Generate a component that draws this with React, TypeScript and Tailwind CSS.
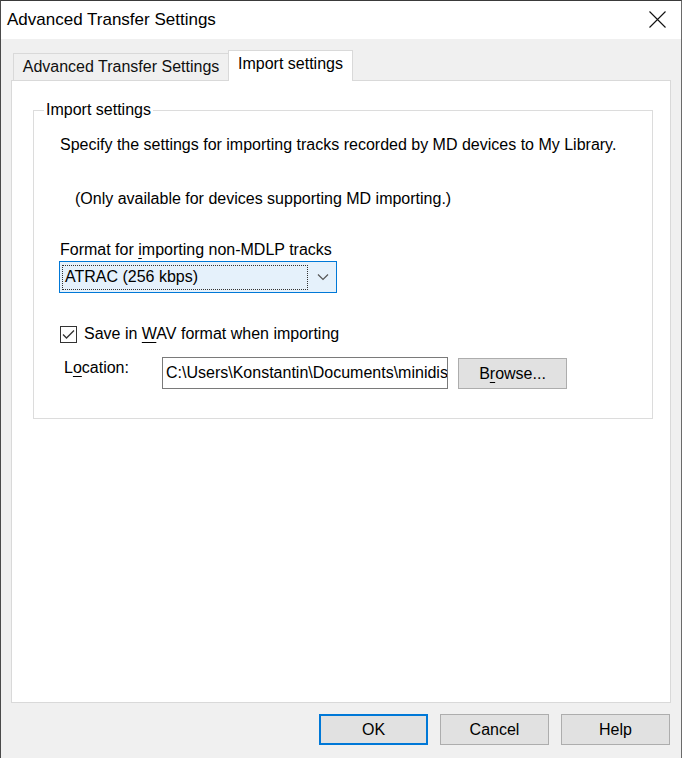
import { useState } from "react";

const font = { fontFamily: '"Liberation Sans", Arial, sans-serif' };

function U({ children }: { children: string }) {
  return <span className="underline underline-offset-[3px]">{children}</span>;
}

function Button({ label, primary }: { label: React.ReactNode; primary?: boolean }) {
  return (
    <button
      className={
        "w-[109px] h-[31px] bg-[#e1e1e1] text-[16px] text-black " +
        (primary ? "border-2 border-[#0078d7]" : "border border-[#adadad]")
      }
    >
      {label}
    </button>
  );
}

export default function App() {
  const [saveWav, setSaveWav] = useState(true);

  return (
    <div
      className="w-[682px] h-[758px] bg-[#f0f0f0] border-l border-t border-r border-l-[#4a4a4a] border-t-[#3a3a3a] border-r-[#6a6a6a] flex flex-col overflow-hidden text-black"
      style={font}
    >
      {/* Title bar */}
      <div className="h-[38px] bg-white flex items-center justify-between pl-[6px] pr-[15px]">
        <span className="text-[17px]">Advanced Transfer Settings</span>
        <svg width="17" height="17" viewBox="0 0 17 17" className="mb-[1px]">
          <path d="M0.5 0.5 L16.5 16.5 M16.5 0.5 L0.5 16.5" stroke="#111" strokeWidth="1.1" />
        </svg>
      </div>

      {/* Tabs */}
      <div className="flex items-end h-[41px] pl-[12px]">
        <div className="h-[27px] w-[215px] border-t border-l border-[#d9d9d9] flex items-center justify-center text-[16px] text-[#111]">
          Advanced Transfer Settings
        </div>
        <div className="h-[31px] w-[125px] bg-white border-t border-l border-r border-[#d9d9d9] flex items-center justify-center text-[16px] pb-[5px] -mb-px relative">
          Import settings
        </div>
      </div>

      {/* Tab panel */}
      <div className="ml-[10px] w-[660px] h-[623px] bg-white border border-[#d9d9d9] pt-[19px] pl-[21px]">
        <fieldset className="w-[620px] h-[319px] border border-[#dcdcdc]">
          <legend className="ml-[10px] px-[2px] text-[16px] leading-[20px]">Import settings</legend>

          <div className="pl-[26px]">
            <div className="text-[16px] leading-[20px] mt-[15px]">
              Specify the settings for importing tracks recorded by MD devices to My Library.
            </div>
            <div className="text-[16px] leading-[20px] mt-[34px] pl-[15px]">
              (Only available for devices supporting MD importing.)
            </div>
            <div className="text-[16px] leading-[20px] mt-[31px]">
              Format for <U>i</U>mporting non-MDLP tracks
            </div>

            {/* Combo box */}
            <div className="mt-[1px] -ml-px w-[278px] h-[32px] bg-[#e5f1fb] border border-[#0078d7] flex items-center pl-[2px] pr-[7px]">
              <div className="h-[25px] w-[246px] border border-dotted border-[#333] flex items-center pl-[2px] text-[16px]">
                ATRAC (256 kbps)
              </div>
              <svg width="12" height="8" viewBox="0 0 12 8" className="ml-auto">
                <path d="M1 1.5 L6 6.5 L11 1.5" fill="none" stroke="#555" strokeWidth="1.2" />
              </svg>
            </div>

            {/* Checkbox */}
            <label className="mt-[31px] flex items-center gap-[7px] text-[16px] leading-[20px] w-fit">
              <button
                onClick={() => setSaveWav(!saveWav)}
                className="w-[17px] h-[17px] border border-[#333] bg-white flex items-center justify-center"
              >
                {saveWav && (
                  <svg width="13" height="11" viewBox="0 0 13 11">
                    <path d="M1 5.5 L4.5 9 L12 1.5" fill="none" stroke="#333" strokeWidth="1.3" />
                  </svg>
                )}
              </button>
              <span>
                Save in <U>W</U>AV format when importing
              </span>
            </label>

            {/* Location */}
            <div className="mt-[13px] flex items-start">
              <span className="w-[102px] pl-[4px] pt-[1px] text-[16px] leading-[20px]">
                L<U>o</U>cation:
              </span>
              <div className="w-[286px] h-[32px] border border-[#7a7a7a] bg-white overflow-hidden whitespace-nowrap pl-[3px] flex items-center text-[16px]">
                C:\Users\Konstantin\Documents\minidisc
              </div>
              <div className="ml-[10px] mt-px">
                <Button
                  label={
                    <>
                      B<U>r</U>owse...
                    </>
                  }
                />
              </div>
            </div>
          </div>
        </fieldset>
      </div>

      {/* Bottom buttons */}
      <div className="flex gap-[12px] pl-[318px] mt-[11px]">
        <Button label="OK" primary />
        <Button label="Cancel" />
        <Button label="Help" />
      </div>
    </div>
  );
}
